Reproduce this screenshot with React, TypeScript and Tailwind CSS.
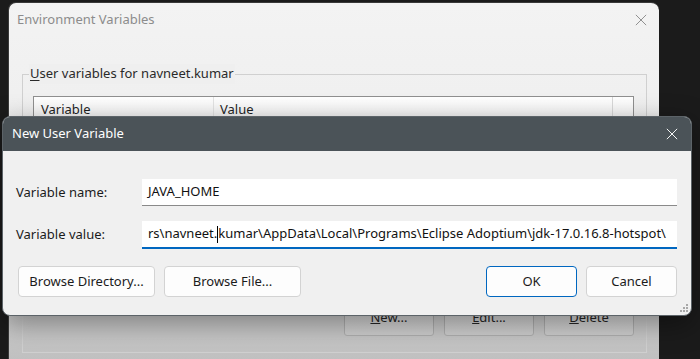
import React from 'react';

const font = { fontFamily: '"Noto Sans", "Open Sans", sans-serif' };

const CloseIcon: React.FC<{ className?: string; color: string }> = ({ className, color }) => (
  <svg className={className} viewBox="0 0 14 14" fill="none">
    <path d="M1 1 L13 13 M13 1 L1 13" stroke={color} strokeWidth="1.1" />
  </svg>
);

const ResizeGrip: React.FC = () => (
  <svg width="10" height="10" viewBox="0 0 10 10" className="absolute right-[2px] bottom-[2px]">
    {[
      [8, 2], [8, 5], [5, 5], [8, 8], [5, 8], [2, 8],
    ].map(([x, y], i) => (
      <rect key={i} x={x - 1} y={y - 1} width="2" height="2" fill="#a8a8a8" />
    ))}
  </svg>
);

const DialogButton: React.FC<{ label: string; primary?: boolean; className?: string }> = ({ label, primary, className }) => (
  <button
    className={`h-[31px] rounded-[4px] bg-[#fdfdfd] text-[13px] text-[#1b1b1b] border ${
      primary ? 'border-[#0067c0]' : 'border-[#d3d3d3]'
    } ${className ?? ''}`}
  >
    {label}
  </button>
);

const BackButton: React.FC<{ children: React.ReactNode }> = ({ children }) => (
  <div className="w-[90px] h-[30px] rounded-[3px] border border-[#b0b0b0] bg-gradient-to-b from-[#dcdcdc] to-[#cfcfcf] flex items-end justify-center pb-[8px] text-[13px] text-[#262626]">
    {children}
  </div>
);

const App: React.FC = () => {
  return (
    <div className="relative w-[700px] h-[359px] overflow-hidden bg-[#1b1b1b]" style={font}>
      {/* Environment Variables window (behind) */}
      <div className="absolute left-[8px] top-[2px] w-[651px] h-[360px] rounded-t-[8px] bg-[linear-gradient(to_bottom,#f3f3f3_0%,#ededed_50%,#dadada_78%,#bfbfbf_100%)] border-l border-t border-[#3a3a3a]">
        <div className="flex items-center justify-between h-[34px] pl-[8px] pr-[12px]">
          <span className="text-[13px] text-[#8c8c8c]">Environment Variables</span>
          <CloseIcon className="w-[12px] h-[12px]" color="#8a8a8a" />
        </div>

        <div className="relative mt-[37px] ml-[13px] w-[625px] h-[279px] border border-[#d0d0d0]">
          <span className="absolute -top-[11px] left-[6px] px-[1px] bg-[#efefef] text-[13px] text-[#2a2a2a]">
            <span className="underline underline-offset-2">U</span>ser variables for navneet.kumar
          </span>

          <div className="mt-[21px] ml-[10px] w-[601px] h-[40px] border border-[#8f8f8f] bg-white">
            <div className="flex h-[22px] bg-gradient-to-b from-white to-[#f2f2f2] text-[13px] text-[#1f1f1f]">
              <div className="w-[180px] border-r border-[#e3e3e3] pl-[7px] leading-[24px]">Variable</div>
              <div className="flex-1 pl-[6px] leading-[24px]">Value</div>
              <div className="w-[21px] border-l border-[#d8d8d8]" />
            </div>
          </div>

          <div className="absolute left-[321px] top-[231px] flex gap-[10px]">
            <BackButton>
              <span><span className="underline">N</span>ew...</span>
            </BackButton>
            <BackButton>
              <span><span className="underline">E</span>dit...</span>
            </BackButton>
            <BackButton>
              <span><span className="underline">D</span>elete</span>
            </BackButton>
          </div>
        </div>
      </div>

      {/* New User Variable dialog */}
      <div className="absolute left-[2px] top-[116px] w-[690px] h-[200px] rounded-[8px] overflow-hidden bg-[#f0f0f0] shadow-[0_8px_28px_rgba(0,0,0,0.4)] border border-[#5c6368]">
        <div className="flex items-center justify-between h-[34px] bg-[#4b5358] pl-[9px] pr-[13px]">
          <span className="text-[13px] text-white">New User Variable</span>
          <CloseIcon className="w-[12px] h-[12px]" color="#ffffff" />
        </div>

        <div className="pl-[13px] pr-[14px] pt-[28px]">
          <div className="flex items-center h-[27px]">
            <label className="w-[126px] text-[13px] text-[#1b1b1b]">Variable name:</label>
            <div className="flex-1 h-[27px] bg-white border-b border-[#8a8a8a] flex items-center pl-[6px] text-[13px] text-[#111]">
              JAVA_HOME
            </div>
          </div>

          <div className="flex items-center h-[28px] mt-[15px]">
            <label className="w-[126px] text-[13px] text-[#1b1b1b]">Variable value:</label>
            <div className="flex-1 h-[28px] bg-white border-b-2 border-[#0067c0] flex items-center pl-[6px] text-[13px] text-[#111] whitespace-nowrap overflow-hidden">
              <span>rs\navneet.</span>
              <span className="inline-block w-px h-[17px] bg-black" />
              <span>kumar\AppData\Local\Programs\Eclipse Adoptium\jdk-17.0.16.8-hotspot\</span>
            </div>
          </div>

          <div className="flex items-center mt-[17px] pl-[2px]">
            <DialogButton label="Browse Directory..." className="w-[137px]" />
            <DialogButton label="Browse File..." className="w-[137px] ml-[9px]" />
            <div className="flex-1" />
            <DialogButton label="OK" primary className="w-[91px]" />
            <DialogButton label="Cancel" className="w-[91px] ml-[9px]" />
          </div>
        </div>
        <ResizeGrip />
      </div>
    </div>
  );
};

export default App;
